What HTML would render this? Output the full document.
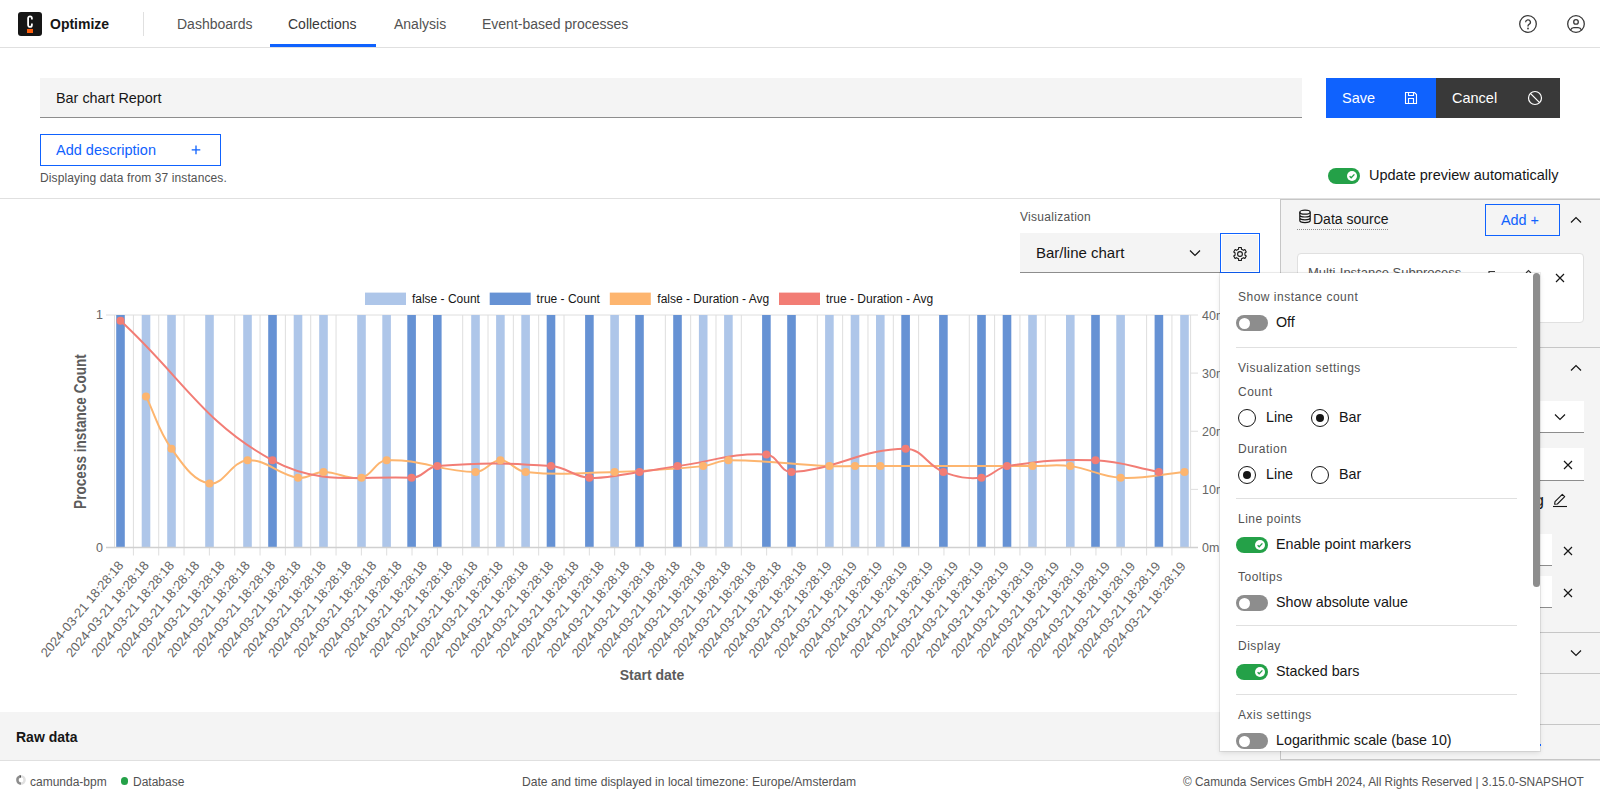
<!DOCTYPE html>
<html><head><meta charset="utf-8">
<style>
*{box-sizing:border-box;margin:0;padding:0}
html,body{width:1600px;height:800px;overflow:hidden;background:#fff;font-family:"Liberation Sans",sans-serif;color:#161616}
.a{position:absolute;white-space:nowrap}
.lbl{font-size:12px;color:#525252;letter-spacing:0.5px}
</style></head><body>
<!-- header -->
<div class="a" style="left:0;top:0;width:1600px;height:48px;border-bottom:1px solid #e0e0e0;background:#fff"></div>
<div class="a" style="left:18px;top:12px;width:24px;height:24px;background:#161616;border-radius:3px"></div>
<svg class="a" style="left:0;top:0" width="48" height="48" viewBox="0 0 48 48"><path d="M31.9 19.6V18.3A1.9 2 0 0 0 28.1 18.3V24.9A1.9 2 0 0 0 31.9 24.9V23.4" fill="none" stroke="#fff" stroke-width="1.8"/></svg>
<div class="a" style="left:27px;top:29.2px;width:6px;height:3.4px;background:#fc5d0d"></div>
<div class="a" style="left:50px;top:16px;font-size:14px;font-weight:bold;line-height:16px">Optimize</div>
<div class="a" style="left:143px;top:12px;width:1px;height:24px;background:#e0e0e0"></div>
<div class="a" style="left:177px;top:16px;font-size:14px;line-height:16px;color:#525252">Dashboards</div>
<div class="a" style="left:288px;top:16px;font-size:14px;line-height:16px;color:#393939">Collections</div>
<div class="a" style="left:394px;top:16px;font-size:14px;line-height:16px;color:#525252">Analysis</div>
<div class="a" style="left:482px;top:16px;font-size:14px;line-height:16px;color:#525252">Event-based processes</div>
<div class="a" style="left:270px;top:44px;width:106px;height:3px;background:#0f62fe"></div>
<svg class="a" style="left:1518px;top:14px" width="20" height="20" viewBox="0 0 20 20"><circle cx="10" cy="10" r="8.3" fill="none" stroke="#393939" stroke-width="1.3"/><path d="M7.6 8.2a2.4 2.4 0 1 1 3.4 2.2c-.7.4-1 .8-1 1.6v.6" fill="none" stroke="#393939" stroke-width="1.3"/><circle cx="10" cy="14.5" r=".9" fill="#393939"/></svg>
<svg class="a" style="left:1566px;top:14px" width="20" height="20" viewBox="0 0 20 20"><circle cx="10" cy="10" r="8.3" fill="none" stroke="#393939" stroke-width="1.3"/><circle cx="10" cy="7.9" r="2.3" fill="none" stroke="#393939" stroke-width="1.3"/><path d="M4.4 16.2c.8-1.8 1.8-2.6 3.4-2.6h4.4c1.6 0 2.6.8 3.4 2.6" fill="none" stroke="#393939" stroke-width="1.3"/></svg>

<!-- title row -->
<div class="a" style="left:40px;top:78px;width:1262px;height:40px;background:#f4f4f4;border-bottom:1px solid #8d8d8d"></div>
<div class="a" style="left:56px;top:89px;font-size:14.4px;line-height:18px">Bar chart Report</div>
<div class="a" style="left:1326px;top:78px;width:110px;height:40px;background:#0f62fe"></div>
<div class="a" style="left:1342px;top:89px;font-size:14.5px;line-height:18px;color:#fff">Save</div>
<svg class="a" style="left:1403px;top:90px" width="16" height="16" viewBox="0 0 16 16"><path d="M2.5 2.5h9l2 2v9h-11z" fill="none" stroke="#fff" stroke-width="1.1"/><path d="M5.5 2.5v3h5v-3M5.5 13.5v-5h5v5" fill="none" stroke="#fff" stroke-width="1.1"/></svg>
<div class="a" style="left:1436px;top:78px;width:124px;height:40px;background:#393939"></div>
<div class="a" style="left:1452px;top:89px;font-size:14.5px;line-height:18px;color:#fff">Cancel</div>
<svg class="a" style="left:1527px;top:90px" width="16" height="16" viewBox="0 0 16 16"><circle cx="8" cy="8" r="6.5" fill="none" stroke="#fff" stroke-width="1.2"/><path d="M3.4 3.4l9.2 9.2" stroke="#fff" stroke-width="1.2"/></svg>

<div class="a" style="left:40px;top:134px;width:181px;height:32px;border:1px solid #0f62fe"></div>
<div class="a" style="left:56px;top:141px;font-size:14.5px;line-height:18px;color:#0f62fe">Add description</div>
<svg class="a" style="left:188px;top:142px" width="16" height="16" viewBox="0 0 16 16"><path d="M8 3.6v8.6M3.7 7.9h8.6" stroke="#0f62fe" stroke-width="1.3"/></svg>
<div class="a" style="left:40px;top:171px;font-size:12px;line-height:14px;color:#525252;letter-spacing:0.1px">Displaying data from 37 instances.</div>

<div class="a" style="left:1328px;top:168px;width:32px;height:16px;border-radius:8px;background:#24a148"></div>
<div class="a" style="left:1347px;top:171px;width:10px;height:10px;border-radius:5px;background:#fff"></div>
<svg class="a" style="left:1347px;top:171px" width="10" height="10" viewBox="0 0 10 10"><path d="M2.6 5.2l1.6 1.6 3.2-3.4" fill="none" stroke="#24a148" stroke-width="1.3"/></svg>
<div class="a" style="left:1369px;top:166px;font-size:14.5px;line-height:18px">Update preview automatically</div>

<div class="a" style="left:0;top:198px;width:1600px;height:1px;background:#e0e0e0"></div>

<svg class="a" style="left:0;top:0" width="1600" height="800" viewBox="0 0 1600 800" font-family="Liberation Sans, sans-serif">
<rect x="365" y="292.6" width="41" height="12.4" fill="#aec6e9"/>
<text x="411.9" y="302.5" font-size="12" fill="#161616">false - Count</text>
<rect x="489.7" y="292.6" width="41" height="12.4" fill="#6692d4"/>
<text x="536.6" y="302.5" font-size="12" fill="#161616">true - Count</text>
<rect x="609.8" y="292.6" width="41" height="12.4" fill="#fdb56f"/>
<text x="657.3" y="302.5" font-size="12" fill="#161616">false - Duration - Avg</text>
<rect x="779" y="292.6" width="41" height="12.4" fill="#f27d75"/>
<text x="826" y="302.5" font-size="12" fill="#161616">true - Duration - Avg</text>
<line x1="133.40" y1="315.0" x2="133.40" y2="555.5" stroke="#dedede" stroke-width="1"/>
<line x1="158.73" y1="315.0" x2="158.73" y2="555.5" stroke="#dedede" stroke-width="1"/>
<line x1="184.06" y1="315.0" x2="184.06" y2="555.5" stroke="#dedede" stroke-width="1"/>
<line x1="209.39" y1="315.0" x2="209.39" y2="555.5" stroke="#dedede" stroke-width="1"/>
<line x1="234.72" y1="315.0" x2="234.72" y2="555.5" stroke="#dedede" stroke-width="1"/>
<line x1="260.05" y1="315.0" x2="260.05" y2="555.5" stroke="#dedede" stroke-width="1"/>
<line x1="285.38" y1="315.0" x2="285.38" y2="555.5" stroke="#dedede" stroke-width="1"/>
<line x1="310.71" y1="315.0" x2="310.71" y2="555.5" stroke="#dedede" stroke-width="1"/>
<line x1="336.04" y1="315.0" x2="336.04" y2="555.5" stroke="#dedede" stroke-width="1"/>
<line x1="361.37" y1="315.0" x2="361.37" y2="555.5" stroke="#dedede" stroke-width="1"/>
<line x1="386.70" y1="315.0" x2="386.70" y2="555.5" stroke="#dedede" stroke-width="1"/>
<line x1="412.03" y1="315.0" x2="412.03" y2="555.5" stroke="#dedede" stroke-width="1"/>
<line x1="437.36" y1="315.0" x2="437.36" y2="555.5" stroke="#dedede" stroke-width="1"/>
<line x1="462.69" y1="315.0" x2="462.69" y2="555.5" stroke="#dedede" stroke-width="1"/>
<line x1="488.02" y1="315.0" x2="488.02" y2="555.5" stroke="#dedede" stroke-width="1"/>
<line x1="513.35" y1="315.0" x2="513.35" y2="555.5" stroke="#dedede" stroke-width="1"/>
<line x1="538.68" y1="315.0" x2="538.68" y2="555.5" stroke="#dedede" stroke-width="1"/>
<line x1="564.01" y1="315.0" x2="564.01" y2="555.5" stroke="#dedede" stroke-width="1"/>
<line x1="589.34" y1="315.0" x2="589.34" y2="555.5" stroke="#dedede" stroke-width="1"/>
<line x1="614.67" y1="315.0" x2="614.67" y2="555.5" stroke="#dedede" stroke-width="1"/>
<line x1="640.00" y1="315.0" x2="640.00" y2="555.5" stroke="#dedede" stroke-width="1"/>
<line x1="665.33" y1="315.0" x2="665.33" y2="555.5" stroke="#dedede" stroke-width="1"/>
<line x1="690.66" y1="315.0" x2="690.66" y2="555.5" stroke="#dedede" stroke-width="1"/>
<line x1="715.99" y1="315.0" x2="715.99" y2="555.5" stroke="#dedede" stroke-width="1"/>
<line x1="741.32" y1="315.0" x2="741.32" y2="555.5" stroke="#dedede" stroke-width="1"/>
<line x1="766.65" y1="315.0" x2="766.65" y2="555.5" stroke="#dedede" stroke-width="1"/>
<line x1="791.98" y1="315.0" x2="791.98" y2="555.5" stroke="#dedede" stroke-width="1"/>
<line x1="817.31" y1="315.0" x2="817.31" y2="555.5" stroke="#dedede" stroke-width="1"/>
<line x1="842.64" y1="315.0" x2="842.64" y2="555.5" stroke="#dedede" stroke-width="1"/>
<line x1="867.97" y1="315.0" x2="867.97" y2="555.5" stroke="#dedede" stroke-width="1"/>
<line x1="893.30" y1="315.0" x2="893.30" y2="555.5" stroke="#dedede" stroke-width="1"/>
<line x1="918.63" y1="315.0" x2="918.63" y2="555.5" stroke="#dedede" stroke-width="1"/>
<line x1="943.96" y1="315.0" x2="943.96" y2="555.5" stroke="#dedede" stroke-width="1"/>
<line x1="969.29" y1="315.0" x2="969.29" y2="555.5" stroke="#dedede" stroke-width="1"/>
<line x1="994.62" y1="315.0" x2="994.62" y2="555.5" stroke="#dedede" stroke-width="1"/>
<line x1="1019.95" y1="315.0" x2="1019.95" y2="555.5" stroke="#dedede" stroke-width="1"/>
<line x1="1045.28" y1="315.0" x2="1045.28" y2="555.5" stroke="#dedede" stroke-width="1"/>
<line x1="1070.61" y1="315.0" x2="1070.61" y2="555.5" stroke="#dedede" stroke-width="1"/>
<line x1="1095.94" y1="315.0" x2="1095.94" y2="555.5" stroke="#dedede" stroke-width="1"/>
<line x1="1121.27" y1="315.0" x2="1121.27" y2="555.5" stroke="#dedede" stroke-width="1"/>
<line x1="1146.60" y1="315.0" x2="1146.60" y2="555.5" stroke="#dedede" stroke-width="1"/>
<line x1="1171.93" y1="315.0" x2="1171.93" y2="555.5" stroke="#dedede" stroke-width="1"/>
<line x1="114.5" y1="315.0" x2="114.5" y2="547.5" stroke="#dedede" stroke-width="1"/>
<line x1="106" y1="315.0" x2="1198" y2="315.0" stroke="#dedede" stroke-width="1"/>
<line x1="1190.6" y1="315.0" x2="1190.6" y2="547.5" stroke="#dedede" stroke-width="1"/>
<line x1="1190.6" y1="489.38" x2="1198" y2="489.38" stroke="#dedede" stroke-width="1"/>
<line x1="1190.6" y1="431.25" x2="1198" y2="431.25" stroke="#dedede" stroke-width="1"/>
<line x1="1190.6" y1="373.12" x2="1198" y2="373.12" stroke="#dedede" stroke-width="1"/>
<rect x="116.20" y="315.0" width="8.6" height="232.50" fill="#6692d4"/>
<rect x="141.70" y="315.0" width="8.6" height="232.50" fill="#aec6e9"/>
<rect x="167.20" y="315.0" width="8.6" height="232.50" fill="#aec6e9"/>
<rect x="205.20" y="315.0" width="8.6" height="232.50" fill="#aec6e9"/>
<rect x="243.20" y="315.0" width="8.6" height="232.50" fill="#aec6e9"/>
<rect x="268.20" y="315.0" width="8.6" height="232.50" fill="#6692d4"/>
<rect x="293.70" y="315.0" width="8.6" height="232.50" fill="#aec6e9"/>
<rect x="319.20" y="315.0" width="8.6" height="232.50" fill="#aec6e9"/>
<rect x="357.20" y="315.0" width="8.6" height="232.50" fill="#aec6e9"/>
<rect x="382.30" y="315.0" width="8.6" height="232.50" fill="#aec6e9"/>
<rect x="407.30" y="315.0" width="8.6" height="232.50" fill="#6692d4"/>
<rect x="433.00" y="315.0" width="8.6" height="232.50" fill="#6692d4"/>
<rect x="471.20" y="315.0" width="8.6" height="232.50" fill="#aec6e9"/>
<rect x="496.10" y="315.0" width="8.6" height="232.50" fill="#aec6e9"/>
<rect x="521.30" y="315.0" width="8.6" height="232.50" fill="#aec6e9"/>
<rect x="546.70" y="315.0" width="8.6" height="232.50" fill="#6692d4"/>
<rect x="585.10" y="315.0" width="8.6" height="232.50" fill="#6692d4"/>
<rect x="610.30" y="315.0" width="8.6" height="232.50" fill="#aec6e9"/>
<rect x="635.20" y="315.0" width="8.6" height="232.50" fill="#6692d4"/>
<rect x="673.20" y="315.0" width="8.6" height="232.50" fill="#6692d4"/>
<rect x="698.90" y="315.0" width="8.6" height="232.50" fill="#aec6e9"/>
<rect x="724.10" y="315.0" width="8.6" height="232.50" fill="#aec6e9"/>
<rect x="762.10" y="315.0" width="8.6" height="232.50" fill="#6692d4"/>
<rect x="787.20" y="315.0" width="8.6" height="232.50" fill="#6692d4"/>
<rect x="825.10" y="315.0" width="8.6" height="232.50" fill="#aec6e9"/>
<rect x="850.70" y="315.0" width="8.6" height="232.50" fill="#aec6e9"/>
<rect x="876.00" y="315.0" width="8.6" height="232.50" fill="#aec6e9"/>
<rect x="901.30" y="315.0" width="8.6" height="232.50" fill="#6692d4"/>
<rect x="939.10" y="315.0" width="8.6" height="232.50" fill="#6692d4"/>
<rect x="977.20" y="315.0" width="8.6" height="232.50" fill="#6692d4"/>
<rect x="1002.70" y="315.0" width="8.6" height="232.50" fill="#6692d4"/>
<rect x="1028.20" y="315.0" width="8.6" height="232.50" fill="#aec6e9"/>
<rect x="1066.00" y="315.0" width="8.6" height="232.50" fill="#aec6e9"/>
<rect x="1091.20" y="315.0" width="8.6" height="232.50" fill="#6692d4"/>
<rect x="1116.30" y="315.0" width="8.6" height="232.50" fill="#aec6e9"/>
<rect x="1154.60" y="315.0" width="8.6" height="232.50" fill="#6692d4"/>
<rect x="1180.20" y="315.0" width="8.6" height="232.50" fill="#aec6e9"/>
<line x1="106" y1="547.5" x2="1198" y2="547.5" stroke="#d0d0d0" stroke-width="1.5"/>
<path d="M146.00 396.38 C156.20 417.30 158.03 430.20 171.50 448.69 C183.43 465.07 193.19 481.07 209.50 483.56 C223.59 485.72 231.40 461.37 247.50 460.31 C266.80 459.04 277.59 474.63 298.00 477.75 C307.99 479.28 313.22 471.94 323.50 471.94 C338.62 471.94 347.44 480.34 361.50 477.75 C372.68 475.69 375.01 460.90 386.60 460.31 C420.61 458.58 440.66 471.94 475.50 471.94 C486.18 471.94 490.43 460.31 500.40 460.31 C510.47 460.31 514.74 470.83 525.60 471.94 C560.42 475.48 579.04 473.10 614.60 471.94 C650.08 470.78 667.95 469.73 703.20 466.12 C713.47 465.08 718.12 460.31 728.40 460.31 C768.60 460.31 788.99 464.27 829.40 466.12 C839.63 466.59 844.76 466.12 855.00 466.12 C865.12 466.12 870.18 466.12 880.30 466.12 C941.18 466.12 971.62 466.12 1032.50 466.12 C1047.62 466.12 1055.40 464.16 1070.30 466.12 C1090.64 468.81 1100.23 476.71 1120.60 477.75 C1145.91 479.04 1158.94 474.26 1184.50 471.94" fill="none" stroke="#fdb56f" stroke-width="2"/>
<path d="M120.50 320.81 C181.30 376.61 203.17 422.94 272.50 460.31 C319.61 485.71 356.72 475.81 411.60 477.75 C422.64 478.14 426.22 467.05 437.30 466.12 C481.98 462.40 506.03 462.69 551.00 466.12 C566.87 467.34 573.72 476.72 589.40 477.75 C609.12 479.04 619.50 474.58 639.50 471.94 C654.74 469.93 662.27 468.22 677.50 466.12 C713.03 461.24 732.39 452.77 766.40 454.50 C777.99 455.09 779.92 472.42 791.50 471.94 C835.60 470.10 861.61 448.69 905.60 448.69 C922.37 448.69 927.15 465.72 943.40 471.94 C957.51 477.34 966.77 479.10 981.50 477.75 C992.21 476.77 996.05 467.80 1007.00 466.12 C1041.65 460.82 1060.31 458.97 1095.50 460.31 C1121.07 461.29 1133.54 467.29 1158.90 471.94" fill="none" stroke="#f27d75" stroke-width="2"/>
<circle cx="146" cy="396.38" r="4" fill="#fdb56f"/>
<circle cx="171.5" cy="448.69" r="4" fill="#fdb56f"/>
<circle cx="209.5" cy="483.56" r="4" fill="#fdb56f"/>
<circle cx="247.5" cy="460.31" r="4" fill="#fdb56f"/>
<circle cx="298" cy="477.75" r="4" fill="#fdb56f"/>
<circle cx="323.5" cy="471.94" r="4" fill="#fdb56f"/>
<circle cx="361.5" cy="477.75" r="4" fill="#fdb56f"/>
<circle cx="386.6" cy="460.31" r="4" fill="#fdb56f"/>
<circle cx="475.5" cy="471.94" r="4" fill="#fdb56f"/>
<circle cx="500.4" cy="460.31" r="4" fill="#fdb56f"/>
<circle cx="525.6" cy="471.94" r="4" fill="#fdb56f"/>
<circle cx="614.6" cy="471.94" r="4" fill="#fdb56f"/>
<circle cx="703.2" cy="466.12" r="4" fill="#fdb56f"/>
<circle cx="728.4" cy="460.31" r="4" fill="#fdb56f"/>
<circle cx="829.4" cy="466.12" r="4" fill="#fdb56f"/>
<circle cx="855" cy="466.12" r="4" fill="#fdb56f"/>
<circle cx="880.3" cy="466.12" r="4" fill="#fdb56f"/>
<circle cx="1032.5" cy="466.12" r="4" fill="#fdb56f"/>
<circle cx="1070.3" cy="466.12" r="4" fill="#fdb56f"/>
<circle cx="1120.6" cy="477.75" r="4" fill="#fdb56f"/>
<circle cx="1184.5" cy="471.94" r="4" fill="#fdb56f"/>
<circle cx="120.5" cy="320.81" r="4" fill="#f27d75"/>
<circle cx="272.5" cy="460.31" r="4" fill="#f27d75"/>
<circle cx="411.6" cy="477.75" r="4" fill="#f27d75"/>
<circle cx="437.3" cy="466.12" r="4" fill="#f27d75"/>
<circle cx="551" cy="466.12" r="4" fill="#f27d75"/>
<circle cx="589.4" cy="477.75" r="4" fill="#f27d75"/>
<circle cx="639.5" cy="471.94" r="4" fill="#f27d75"/>
<circle cx="677.5" cy="466.12" r="4" fill="#f27d75"/>
<circle cx="766.4" cy="454.50" r="4" fill="#f27d75"/>
<circle cx="791.5" cy="471.94" r="4" fill="#f27d75"/>
<circle cx="905.6" cy="448.69" r="4" fill="#f27d75"/>
<circle cx="943.4" cy="471.94" r="4" fill="#f27d75"/>
<circle cx="981.5" cy="477.75" r="4" fill="#f27d75"/>
<circle cx="1007" cy="466.12" r="4" fill="#f27d75"/>
<circle cx="1095.5" cy="460.31" r="4" fill="#f27d75"/>
<circle cx="1158.9" cy="471.94" r="4" fill="#f27d75"/>
<text x="103" y="318.5" font-size="12.5" fill="#666666" text-anchor="end">1</text>
<text x="103" y="551.5" font-size="12.5" fill="#666666" text-anchor="end">0</text>
<text x="1202" y="552.00" font-size="12.5" fill="#666666">0m</text>
<text x="1202" y="493.88" font-size="12.5" fill="#666666">10m</text>
<text x="1202" y="435.75" font-size="12.5" fill="#666666">20m</text>
<text x="1202" y="377.62" font-size="12.5" fill="#666666">30m</text>
<text x="1202" y="319.50" font-size="12.5" fill="#666666">40m</text>
<text transform="translate(124.25,565.60) rotate(-50)" font-size="13" fill="#666666" text-anchor="end">2024-03-21 18:28:18</text>
<text transform="translate(149.54,565.62) rotate(-50)" font-size="13" fill="#666666" text-anchor="end">2024-03-21 18:28:18</text>
<text transform="translate(174.83,565.64) rotate(-50)" font-size="13" fill="#666666" text-anchor="end">2024-03-21 18:28:18</text>
<text transform="translate(200.12,565.66) rotate(-50)" font-size="13" fill="#666666" text-anchor="end">2024-03-21 18:28:18</text>
<text transform="translate(225.41,565.68) rotate(-50)" font-size="13" fill="#666666" text-anchor="end">2024-03-21 18:28:18</text>
<text transform="translate(250.70,565.70) rotate(-50)" font-size="13" fill="#666666" text-anchor="end">2024-03-21 18:28:18</text>
<text transform="translate(275.99,565.72) rotate(-50)" font-size="13" fill="#666666" text-anchor="end">2024-03-21 18:28:18</text>
<text transform="translate(301.28,565.74) rotate(-50)" font-size="13" fill="#666666" text-anchor="end">2024-03-21 18:28:18</text>
<text transform="translate(326.57,565.76) rotate(-50)" font-size="13" fill="#666666" text-anchor="end">2024-03-21 18:28:18</text>
<text transform="translate(351.86,565.78) rotate(-50)" font-size="13" fill="#666666" text-anchor="end">2024-03-21 18:28:18</text>
<text transform="translate(377.15,565.80) rotate(-50)" font-size="13" fill="#666666" text-anchor="end">2024-03-21 18:28:18</text>
<text transform="translate(402.44,565.82) rotate(-50)" font-size="13" fill="#666666" text-anchor="end">2024-03-21 18:28:18</text>
<text transform="translate(427.73,565.84) rotate(-50)" font-size="13" fill="#666666" text-anchor="end">2024-03-21 18:28:18</text>
<text transform="translate(453.02,565.86) rotate(-50)" font-size="13" fill="#666666" text-anchor="end">2024-03-21 18:28:18</text>
<text transform="translate(478.31,565.88) rotate(-50)" font-size="13" fill="#666666" text-anchor="end">2024-03-21 18:28:18</text>
<text transform="translate(503.60,565.90) rotate(-50)" font-size="13" fill="#666666" text-anchor="end">2024-03-21 18:28:18</text>
<text transform="translate(528.89,565.92) rotate(-50)" font-size="13" fill="#666666" text-anchor="end">2024-03-21 18:28:18</text>
<text transform="translate(554.18,565.94) rotate(-50)" font-size="13" fill="#666666" text-anchor="end">2024-03-21 18:28:18</text>
<text transform="translate(579.47,565.96) rotate(-50)" font-size="13" fill="#666666" text-anchor="end">2024-03-21 18:28:18</text>
<text transform="translate(604.76,565.98) rotate(-50)" font-size="13" fill="#666666" text-anchor="end">2024-03-21 18:28:18</text>
<text transform="translate(630.05,566.00) rotate(-50)" font-size="13" fill="#666666" text-anchor="end">2024-03-21 18:28:18</text>
<text transform="translate(655.34,566.02) rotate(-50)" font-size="13" fill="#666666" text-anchor="end">2024-03-21 18:28:18</text>
<text transform="translate(680.63,566.04) rotate(-50)" font-size="13" fill="#666666" text-anchor="end">2024-03-21 18:28:18</text>
<text transform="translate(705.92,566.06) rotate(-50)" font-size="13" fill="#666666" text-anchor="end">2024-03-21 18:28:18</text>
<text transform="translate(731.21,566.08) rotate(-50)" font-size="13" fill="#666666" text-anchor="end">2024-03-21 18:28:18</text>
<text transform="translate(756.50,566.10) rotate(-50)" font-size="13" fill="#666666" text-anchor="end">2024-03-21 18:28:18</text>
<text transform="translate(781.79,566.12) rotate(-50)" font-size="13" fill="#666666" text-anchor="end">2024-03-21 18:28:18</text>
<text transform="translate(807.08,566.14) rotate(-50)" font-size="13" fill="#666666" text-anchor="end">2024-03-21 18:28:18</text>
<text transform="translate(832.37,566.16) rotate(-50)" font-size="13" fill="#666666" text-anchor="end">2024-03-21 18:28:19</text>
<text transform="translate(857.66,566.18) rotate(-50)" font-size="13" fill="#666666" text-anchor="end">2024-03-21 18:28:19</text>
<text transform="translate(882.95,566.20) rotate(-50)" font-size="13" fill="#666666" text-anchor="end">2024-03-21 18:28:19</text>
<text transform="translate(908.24,566.22) rotate(-50)" font-size="13" fill="#666666" text-anchor="end">2024-03-21 18:28:19</text>
<text transform="translate(933.53,566.24) rotate(-50)" font-size="13" fill="#666666" text-anchor="end">2024-03-21 18:28:19</text>
<text transform="translate(958.82,566.26) rotate(-50)" font-size="13" fill="#666666" text-anchor="end">2024-03-21 18:28:19</text>
<text transform="translate(984.11,566.28) rotate(-50)" font-size="13" fill="#666666" text-anchor="end">2024-03-21 18:28:19</text>
<text transform="translate(1009.40,566.30) rotate(-50)" font-size="13" fill="#666666" text-anchor="end">2024-03-21 18:28:19</text>
<text transform="translate(1034.69,566.32) rotate(-50)" font-size="13" fill="#666666" text-anchor="end">2024-03-21 18:28:19</text>
<text transform="translate(1059.98,566.34) rotate(-50)" font-size="13" fill="#666666" text-anchor="end">2024-03-21 18:28:19</text>
<text transform="translate(1085.27,566.36) rotate(-50)" font-size="13" fill="#666666" text-anchor="end">2024-03-21 18:28:19</text>
<text transform="translate(1110.56,566.38) rotate(-50)" font-size="13" fill="#666666" text-anchor="end">2024-03-21 18:28:19</text>
<text transform="translate(1135.85,566.40) rotate(-50)" font-size="13" fill="#666666" text-anchor="end">2024-03-21 18:28:19</text>
<text transform="translate(1161.14,566.42) rotate(-50)" font-size="13" fill="#666666" text-anchor="end">2024-03-21 18:28:19</text>
<text transform="translate(1186.43,566.44) rotate(-50)" font-size="13" fill="#666666" text-anchor="end">2024-03-21 18:28:19</text>
<text transform="translate(85.5,431.5) rotate(-90) scale(1,1.15)" font-size="13.6" font-weight="bold" fill="#5c5c5c" text-anchor="middle">Process instance Count</text>
<text x="652" y="680" font-size="14" font-weight="bold" fill="#5c5c5c" text-anchor="middle">Start date</text>
</svg>

<!-- visualization -->
<div class="a lbl" style="left:1020px;top:210px;line-height:14px;letter-spacing:0.3px">Visualization</div>
<div class="a" style="left:1020px;top:233px;width:200px;height:40px;background:#f4f4f4;border-bottom:1px solid #8d8d8d"></div>
<div class="a" style="left:1036px;top:244px;font-size:15px;line-height:18px">Bar/line chart</div>
<svg class="a" style="left:1187px;top:245px" width="16" height="16" viewBox="0 0 16 16"><path d="M3 5.5l5 5 5-5" fill="none" stroke="#161616" stroke-width="1.2"/></svg>
<div class="a" style="left:1220px;top:233px;width:40px;height:40px;background:#f4f4f4;border:1px solid #0f62fe;box-shadow:inset 0 0 0 1px #fff"></div>
<svg class="a" style="left:1232px;top:246px" width="16" height="16" viewBox="0 0 16 16"><path d="M5.50 3.67 L6.54 3.22 L6.63 1.54 L9.37 1.54 L9.46 3.22 L10.50 3.67 L11.41 4.34 L12.90 3.58 L14.28 5.96 L12.87 6.88 L13.00 8.00 L12.87 9.12 L14.28 10.04 L12.90 12.42 L11.41 11.66 L10.50 12.33 L9.46 12.78 L9.37 14.46 L6.63 14.46 L6.54 12.78 L5.50 12.33 L4.59 11.66 L3.10 12.42 L1.72 10.04 L3.13 9.12 L3.00 8.00 L3.13 6.88 L1.72 5.96 L3.10 3.58 L4.59 4.34Z" fill="none" stroke="#161616" stroke-width="1.1" stroke-linejoin="round"/><circle cx="8" cy="8" r="2.4" fill="none" stroke="#161616" stroke-width="1.1"/></svg>

<!-- right panel -->
<div class="a" style="left:1280px;top:199px;width:320px;height:561px;background:#f4f4f4;border-left:1px solid #c6c6c6;border-top:1px solid #c6c6c6;border-bottom:1px solid #c6c6c6"></div>
<div class="a" style="left:1280px;top:760px;width:320px;height:1px;background:#e0e0e0"></div>

<!-- right panel content -->
<svg class="a" style="left:1298px;top:209px" width="14" height="15" viewBox="0 0 14 15"><ellipse cx="7" cy="3.2" rx="5.2" ry="2" fill="none" stroke="#161616" stroke-width="1.2"/><path d="M1.8 3.2v8.4c0 1.1 2.3 2 5.2 2s5.2-.9 5.2-2V3.2M1.8 6c0 1.1 2.3 2 5.2 2s5.2-.9 5.2-2M1.8 8.8c0 1.1 2.3 2 5.2 2s5.2-.9 5.2-2" fill="none" stroke="#161616" stroke-width="1.2"/></svg>
<div class="a" style="left:1313px;top:211px;font-size:14px;line-height:16px">Data source</div>
<div class="a" style="left:1297px;top:229px;width:91px;height:0;border-top:1px dotted #8d8d8d"></div>
<div class="a" style="left:1485px;top:204px;width:75px;height:32px;border:1px solid #0f62fe"></div>
<div class="a" style="left:1501px;top:211px;font-size:14.4px;line-height:18px;color:#0f62fe">Add +</div>
<svg class="a" style="left:1568px;top:212px" width="16" height="16" viewBox="0 0 16 16"><path d="M3 10.5l5-5 5 5" fill="none" stroke="#161616" stroke-width="1.2"/></svg>
<div class="a" style="left:1297px;top:253px;width:287px;height:70px;background:#fff;border:1px solid #e0e0e0;border-radius:4px"></div>
<div class="a" style="left:1308px;top:265px;font-size:13px;line-height:16px;color:#525252">Multi-Instance Subprocess</div>
<svg class="a" style="left:1486px;top:268px" width="50" height="6" viewBox="0 0 50 6"><path d="M3 5.5V3.5h6M40 5l2.5-2.5L45 5" fill="none" stroke="#393939" stroke-width="1.1"/></svg>
<svg class="a" style="left:1552px;top:270px" width="16" height="16" viewBox="0 0 16 16"><path d="M4 4l8 8M12 4l-8 8" fill="none" stroke="#161616" stroke-width="1.2"/></svg>
<div class="a" style="left:1281px;top:347px;width:319px;height:1px;background:#c6c6c6"></div>
<svg class="a" style="left:1568px;top:360px" width="16" height="16" viewBox="0 0 16 16"><path d="M3 10.5l5-5 5 5" fill="none" stroke="#161616" stroke-width="1.2"/></svg>
<div class="a" style="left:1300px;top:401px;width:284px;height:32px;background:#fff;border-bottom:1px solid #8d8d8d"></div>
<svg class="a" style="left:1552px;top:409px" width="16" height="16" viewBox="0 0 16 16"><path d="M3 5.5l5 5 5-5" fill="none" stroke="#161616" stroke-width="1.2"/></svg>
<div class="a" style="left:1300px;top:448px;width:284px;height:33px;background:#fff;border-bottom:1px solid #8d8d8d"></div>
<svg class="a" style="left:1560px;top:457px" width="16" height="16" viewBox="0 0 16 16"><path d="M4 4l8 8M12 4l-8 8" fill="none" stroke="#161616" stroke-width="1.2"/></svg>
<div class="a" style="left:1535px;top:492px;font-size:16px;line-height:18px;color:#161616">g</div>
<svg class="a" style="left:1552px;top:492px" width="16" height="16" viewBox="0 0 16 16"><path d="M1 14.5h14" stroke="#161616" stroke-width="1.1"/><path d="M2.6 12.3L3 9.6 10.3 2.3 12.7 4.7 5.4 12z" fill="none" stroke="#161616" stroke-width="1.1" stroke-linejoin="round"/></svg>
<div class="a" style="left:1300px;top:534px;width:252px;height:32px;background:#fff;border-bottom:1px solid #8d8d8d"></div>
<svg class="a" style="left:1560px;top:543px" width="16" height="16" viewBox="0 0 16 16"><path d="M4 4l8 8M12 4l-8 8" fill="none" stroke="#161616" stroke-width="1.2"/></svg>
<div class="a" style="left:1300px;top:576px;width:252px;height:32px;background:#fff;border-bottom:1px solid #8d8d8d"></div>
<svg class="a" style="left:1560px;top:585px" width="16" height="16" viewBox="0 0 16 16"><path d="M4 4l8 8M12 4l-8 8" fill="none" stroke="#161616" stroke-width="1.2"/></svg>
<div class="a" style="left:1281px;top:632px;width:319px;height:1px;background:#c6c6c6"></div>
<svg class="a" style="left:1568px;top:645px" width="16" height="16" viewBox="0 0 16 16"><path d="M3 5.5l5 5 5-5" fill="none" stroke="#161616" stroke-width="1.2"/></svg>
<div class="a" style="left:1281px;top:673px;width:319px;height:1px;background:#c6c6c6"></div>
<div class="a" style="left:1281px;top:724px;width:319px;height:1px;background:#c6c6c6"></div>

<!-- raw data -->
<div class="a" style="left:0;top:712px;width:1280px;height:49px;background:#f4f4f4;border-bottom:1px solid #e0e0e0"></div>
<div class="a" style="left:16px;top:729px;font-size:14px;font-weight:bold;line-height:16px">Raw data</div>

<!-- footer -->
<div class="a" style="left:30px;top:775px;font-size:12px;line-height:14px;color:#525252">camunda-bpm</div>
<div class="a" style="left:121px;top:777.3px;width:7px;height:7.6px;border-radius:4px;background:#24a148"></div>
<svg class="a" style="left:13px;top:772px" width="16" height="16" viewBox="0 0 16 16"><circle cx="8" cy="8" r="3.6" fill="none" stroke="#e0e0e0" stroke-width="2.4"/><path d="M8 11.6A3.6 3.6 0 0 1 6.6 4.7" fill="none" stroke="#8d8d8d" stroke-width="2.4"/><path d="M6.6 4.7A3.6 3.6 0 0 1 8 4.4" fill="none" stroke="#525252" stroke-width="2.4"/></svg>
<div class="a" style="left:133px;top:775px;font-size:12px;line-height:14px;color:#525252">Database</div>
<div class="a" style="left:522px;top:775px;font-size:12.1px;line-height:14px;color:#525252">Date and time displayed in local timezone: Europe/Amsterdam</div>
<div class="a" style="left:1183px;top:775px;font-size:11.85px;line-height:14px;color:#525252">© Camunda Services GmbH 2024, All Rights Reserved | 3.15.0-SNAPSHOT</div>

<!-- popup -->
<div class="a" style="left:1220px;top:273px;width:320px;height:478px;background:#fff;box-shadow:0 0 0 1px rgba(0,0,0,0.07),0 2px 5px rgba(0,0,0,0.1)"></div>

<!-- popup content -->
<div class="a" style="left:1238px;top:290px;font-size:12px;line-height:14px;color:#525252;letter-spacing:0.5px">Show instance count</div>
<div class="a" style="left:1236px;top:315px;width:32px;height:16px;border-radius:8px;background:#8d8d8d"></div>
<div class="a" style="left:1238.5px;top:317.5px;width:11px;height:11px;border-radius:6px;background:#fff"></div>
<div class="a" style="left:1276px;top:313px;font-size:14.3px;line-height:18px;color:#161616">Off</div>
<div class="a" style="left:1236px;top:347px;width:281px;height:1px;background:#e0e0e0"></div>
<div class="a" style="left:1238px;top:361px;font-size:12px;line-height:14px;color:#525252;letter-spacing:0.5px">Visualization settings</div>
<div class="a" style="left:1238px;top:385px;font-size:12px;line-height:14px;color:#525252;letter-spacing:0.5px">Count</div>
<div class="a" style="left:1238px;top:409px;width:18px;height:18px;border-radius:9px;border:1px solid #161616;background:#fff"></div>
<div class="a" style="left:1266px;top:408px;font-size:14.3px;line-height:18px;color:#161616">Line</div>
<div class="a" style="left:1311px;top:409px;width:18px;height:18px;border-radius:9px;border:1px solid #161616;background:#fff"></div>
<div class="a" style="left:1316px;top:414px;width:8px;height:8px;border-radius:4px;background:#161616"></div>
<div class="a" style="left:1339px;top:408px;font-size:14.3px;line-height:18px;color:#161616">Bar</div>
<div class="a" style="left:1238px;top:442px;font-size:12px;line-height:14px;color:#525252;letter-spacing:0.5px">Duration</div>
<div class="a" style="left:1238px;top:466px;width:18px;height:18px;border-radius:9px;border:1px solid #161616;background:#fff"></div>
<div class="a" style="left:1243px;top:471px;width:8px;height:8px;border-radius:4px;background:#161616"></div>
<div class="a" style="left:1266px;top:465px;font-size:14.3px;line-height:18px;color:#161616">Line</div>
<div class="a" style="left:1311px;top:466px;width:18px;height:18px;border-radius:9px;border:1px solid #161616;background:#fff"></div>
<div class="a" style="left:1339px;top:465px;font-size:14.3px;line-height:18px;color:#161616">Bar</div>
<div class="a" style="left:1236px;top:498px;width:281px;height:1px;background:#e0e0e0"></div>
<div class="a" style="left:1238px;top:512px;font-size:12px;line-height:14px;color:#525252;letter-spacing:0.5px">Line points</div>
<div class="a" style="left:1236px;top:537px;width:32px;height:16px;border-radius:8px;background:#24a148"></div>
<div class="a" style="left:1255px;top:540px;width:10px;height:10px;border-radius:5px;background:#fff"></div>
<svg class="a" style="left:1255px;top:540px" width="10" height="10" viewBox="0 0 10 10"><path d="M2.6 5.2l1.6 1.6 3.2-3.4" fill="none" stroke="#24a148" stroke-width="1.3"/></svg>
<div class="a" style="left:1276px;top:535px;font-size:14.3px;line-height:18px;color:#161616">Enable point markers</div>
<div class="a" style="left:1238px;top:570px;font-size:12px;line-height:14px;color:#525252;letter-spacing:0.5px">Tooltips</div>
<div class="a" style="left:1236px;top:595px;width:32px;height:16px;border-radius:8px;background:#8d8d8d"></div>
<div class="a" style="left:1238.5px;top:597.5px;width:11px;height:11px;border-radius:6px;background:#fff"></div>
<div class="a" style="left:1276px;top:593px;font-size:14.3px;line-height:18px;color:#161616">Show absolute value</div>
<div class="a" style="left:1236px;top:625px;width:281px;height:1px;background:#e0e0e0"></div>
<div class="a" style="left:1238px;top:639px;font-size:12px;line-height:14px;color:#525252;letter-spacing:0.5px">Display</div>
<div class="a" style="left:1236px;top:664px;width:32px;height:16px;border-radius:8px;background:#24a148"></div>
<div class="a" style="left:1255px;top:667px;width:10px;height:10px;border-radius:5px;background:#fff"></div>
<svg class="a" style="left:1255px;top:667px" width="10" height="10" viewBox="0 0 10 10"><path d="M2.6 5.2l1.6 1.6 3.2-3.4" fill="none" stroke="#24a148" stroke-width="1.3"/></svg>
<div class="a" style="left:1276px;top:662px;font-size:14.3px;line-height:18px;color:#161616">Stacked bars</div>
<div class="a" style="left:1236px;top:694px;width:281px;height:1px;background:#e0e0e0"></div>
<div class="a" style="left:1238px;top:708px;font-size:12px;line-height:14px;color:#525252;letter-spacing:0.5px">Axis settings</div>
<div class="a" style="left:1236px;top:733px;width:32px;height:16px;border-radius:8px;background:#8d8d8d"></div>
<div class="a" style="left:1238.5px;top:735.5px;width:11px;height:11px;border-radius:6px;background:#fff"></div>
<div class="a" style="left:1276px;top:731px;font-size:14.3px;line-height:18px;color:#161616">Logarithmic scale (base 10)</div>
<div class="a" style="left:1533px;top:273px;width:7px;height:314px;border-radius:4px;background:#8d8d8d"></div>
<div class="a" style="left:1540px;top:744px;width:1px;height:2px;background:#0f62fe"></div>
</body></html>
